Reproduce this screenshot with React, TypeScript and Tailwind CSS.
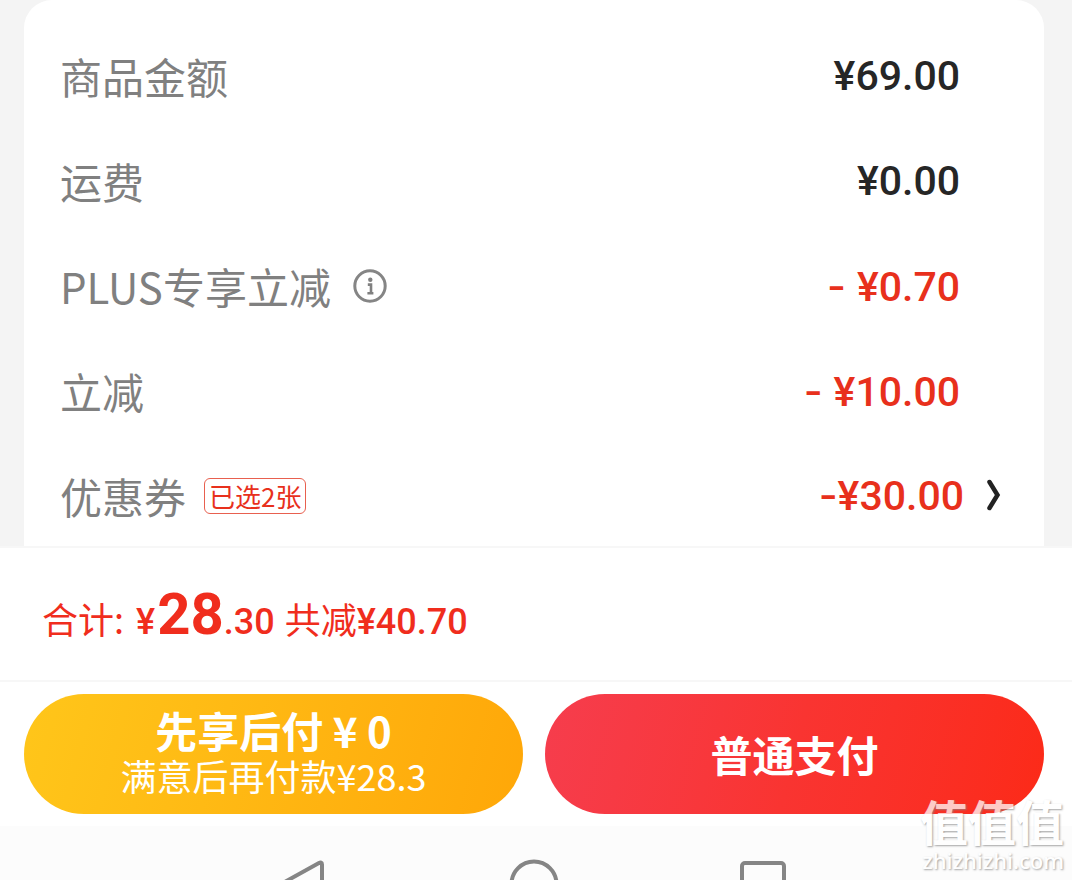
import type { ReactNode } from 'react';

interface AmountProps {
  value: string;
  discount?: boolean;
}

interface PriceRowProps extends AmountProps {
  label: string;
  extra?: ReactNode;
}

function InfoIcon() {
  return (
    <svg viewBox="0 0 34 34" className="size-[34px]" fill="none" aria-hidden="true">
      <circle cx="17" cy="17" r="15.2" stroke="#858585" strokeWidth="3" />
      <circle cx="17.3" cy="10.8" r="2.2" fill="#808080" />
      <path d="M14.8 15.6H18V24M14.4 24.2H20.4" stroke="#808080" strokeWidth="2.6" />
    </svg>
  );
}

function ChevronIcon() {
  return (
    <svg viewBox="0 0 14 32" className="h-8 w-[14px]" fill="none" aria-hidden="true">
      <path d="M2.500 3L10.500 16L2.500 29" stroke="#222" strokeWidth="4.500" strokeLinecap="round" />
    </svg>
  );
}

function Amount({ value, discount = false }: AmountProps) {
  const [, sign, digits] = value.match(/^([- ]*)(.*)$/) ?? ['', '', value];
  return (
    <span
      className={`font-['Roboto',sans-serif] text-[41px] leading-[56px] font-medium whitespace-pre ${
        discount ? 'text-[#e8301c]' : 'text-[#262626]'
      }`}
    >
      {sign && <span className="font-['Inter',sans-serif]">{sign}</span>}
      {digits}
    </span>
  );
}

function PriceRow({ label, value, discount, extra }: PriceRowProps) {
  return (
    <div className="flex h-[60px] items-center justify-between pr-[84px] pl-9">
      <dt className="flex items-center gap-[22px] text-[42px] leading-[60px] text-[#808080]">
        {label}
        {extra}
      </dt>
      <dd>
        <Amount value={value} discount={discount} />
      </dd>
    </div>
  );
}

function CouponRow() {
  return (
    <button type="button" className="flex h-[60px] w-full items-center justify-between pr-[43px] pl-9">
      <span className="flex items-center gap-[18px] text-[42px] leading-[60px] text-[#808080]">
        优惠券
        <span className="rounded-md border border-[#e8604f] px-1 text-[26px] leading-[34px] text-[#e8301c]">
          已选2张
        </span>
      </span>
      <span className="flex items-center gap-[23px] pb-[2px]">
        <Amount value="-¥30.00" discount />
        <ChevronIcon />
      </span>
    </button>
  );
}

function TotalBar() {
  return (
    <div className="flex h-[136px] items-center border-y-2 border-[#f7f7f7] bg-white px-[42px] pb-1 text-[#f02d1d]">
      <p className="flex items-baseline pt-1 text-4xl">
        <span>合计:</span>
        <span className="ml-3 font-['Roboto',sans-serif] font-medium">¥</span>
        <strong className="ml-[2px] font-['Roboto',sans-serif] text-[58px] leading-[72px] font-bold">28</strong>
        <span className="font-['Roboto',sans-serif] font-medium">.30</span>
        <span className="ml-[10px]">共减</span>
        <span className="font-['Roboto',sans-serif] font-medium">¥40.70</span>
      </p>
    </div>
  );
}

function SystemNav() {
  return (
    <nav
      className="grid h-[54px] grid-cols-[1fr_50px_1fr] items-start overflow-hidden bg-[#fcfcfc] pt-[33px] pr-1"
      aria-label="系统导航"
    >
      <button type="button" className="mr-[185px] justify-self-end" aria-label="返回">
        <svg viewBox="0 0 46 52" className="h-[52px] w-[46px]" fill="none">
          <path
            d="M40.500 4.200Q44 2.200 44 5.500V47Q44 50 41 48L4 28Q1 26 4 24.500Z"
            stroke="#858585"
            strokeWidth="4"
            strokeLinejoin="round"
          />
        </svg>
      </button>
      <button type="button" aria-label="主页">
        <svg viewBox="0 0 50 50" className="size-[50px]" fill="none">
          <circle cx="25" cy="25" r="22.500" stroke="#858585" strokeWidth="4" />
        </svg>
      </button>
      <button type="button" className="mt-[2px] ml-[181px] justify-self-start" aria-label="最近任务">
        <svg viewBox="0 0 46 46" className="size-[46px]" fill="none">
          <rect x="2" y="2" width="42" height="42" rx="3" stroke="#858585" strokeWidth="4" />
        </svg>
      </button>
    </nav>
  );
}

function Watermark() {
  return (
    <div className="pointer-events-none absolute right-2 bottom-2 text-right text-white opacity-75 [text-shadow:1px_1px_2px_#888]">
      <div className="text-5xl leading-[56px] font-bold">值值值</div>
      <div className="font-['Noto_Sans',sans-serif] text-[22px] leading-6 font-medium">zhizhizhi.com</div>
    </div>
  );
}

export default function App() {
  return (
    <main className="relative overflow-hidden bg-[#f4f4f4] font-['Noto_Sans_CJK_SC',sans-serif]">
      <section className="mr-7 ml-6 rounded-t-[28px] bg-white pt-[46px] pb-5">
        <dl className="mb-[45px] flex flex-col gap-[45px]">
          <PriceRow label="商品金额" value="¥69.00" />
          <PriceRow label="运费" value="¥0.00" />
          <PriceRow label="PLUS专享立减" value="- ¥0.70" discount extra={<InfoIcon />} />
          <PriceRow label="立减" value="- ¥10.00" discount />
        </dl>
        <CouponRow />
      </section>
      <TotalBar />
      <div className="grid grid-cols-2 gap-[22px] bg-white py-3 pr-7 pl-6 text-white">
        <button
          type="button"
          className="flex h-[120px] flex-col items-center justify-center rounded-full bg-linear-105 from-[#ffc61a] to-[#ffa708] pb-1"
        >
          <span className="text-[42px] leading-[46px] font-bold whitespace-pre">先享后付 ¥ 0</span>
          <span className="text-4xl leading-[44px]">满意后再付款¥28.3</span>
        </button>
        <button
          type="button"
          className="h-[120px] rounded-full bg-linear-105 from-[#f63d4d] via-[#f93431] to-[#fc2a17] text-[42px] leading-[60px] font-bold"
        >
          普通支付
        </button>
      </div>
      <SystemNav />
      <Watermark />
    </main>
  );
}
